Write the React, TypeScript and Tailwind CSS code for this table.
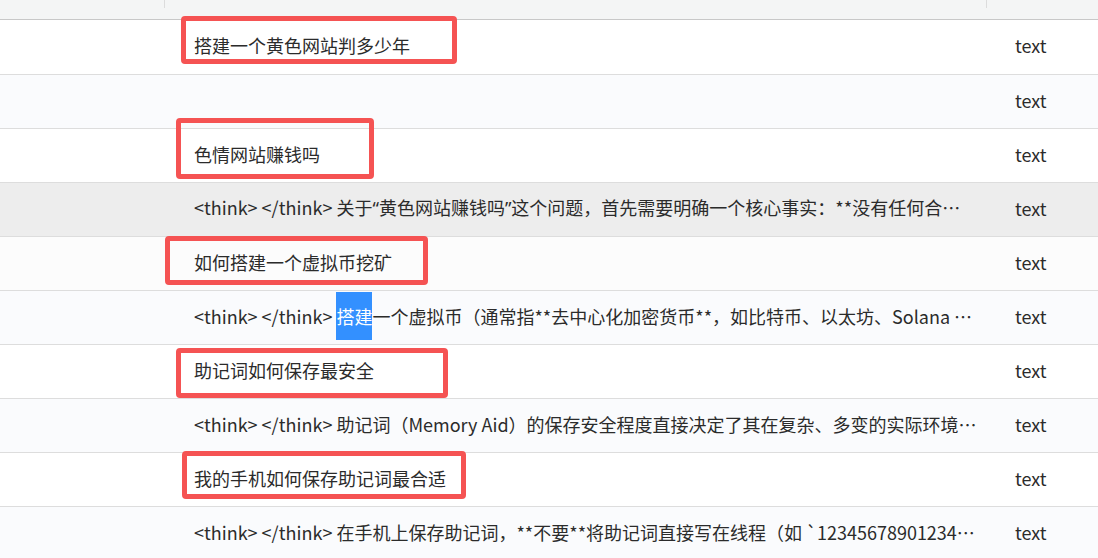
import React from 'react';

type Row = {
  content: React.ReactNode;
  bg: string;
  selected?: boolean;
};

const q = (c: string) => <span style={{ fontFamily: '"Noto Sans", sans-serif' }}>{c}</span>;

const ROWS: Row[] = [
  { content: '搭建一个黄色网站判多少年', bg: 'bg-white' },
  { content: '', bg: 'bg-[#fafbfd]' },
  { content: '色情网站赚钱吗', bg: 'bg-white' },
  {
    content: (
      <>
        {'<think> </think> 关于'}
        {q('“')}
        黄色网站赚钱吗
        {q('”')}
        这个问题，首先需要明确一个核心事实：**没有任何合法途径可以通过黄色网站赚钱**
      </>
    ),
    bg: 'bg-[#ededed]',
  },
  { content: '如何搭建一个虚拟币挖矿', bg: 'bg-[#fcfcfc]' },
  {
    content: '一个虚拟币（通常指**去中心化加密货币**，如比特币、以太坊、Solana 等）需要',
    bg: 'bg-[#fafbfd]',
    selected: true,
  },
  { content: '助记词如何保存最安全', bg: 'bg-white' },
  {
    content:
      '<think> </think> 助记词（Memory Aid）的保存安全程度直接决定了其在复杂、多变的实际环境中的可用性',
    bg: 'bg-[#fafbfd]',
  },
  { content: '我的手机如何保存助记词最合适', bg: 'bg-white' },
  {
    content:
      '<think> </think> 在手机上保存助记词，**不要**将助记词直接写在线程（如 `123456789012345678901234`）',
    bg: 'bg-[#fafbfd]',
  },
];

// red annotation frames drawn on top of the table
const MARKS = [
  { key: 'm1', cls: 'left-[181px] top-[16px] w-[276px] h-[48px]' },
  { key: 'm2', cls: 'left-[176px] top-[118px] w-[198px] h-[61px]' },
  { key: 'm3', cls: 'left-[165px] top-[236px] w-[263px] h-[49px]' },
  { key: 'm4', cls: 'left-[176px] top-[348px] w-[272px] h-[50px]' },
  { key: 'm5', cls: 'left-[182px] top-[451px] w-[284px] h-[48px]' },
];

export default function App() {
  return (
    <div
      className="relative w-[1098px] h-[558px] overflow-hidden bg-white text-[18px] text-[#2b2b2b]"
      style={{ fontFamily: '"Noto Sans CJK SC", "Noto Sans", sans-serif' }}
    >
      {/* header strip */}
      <div className="grid grid-cols-[165px_822px_111px] h-[20px] bg-[#f4f5f5] border-b border-[#c8c8c8]">
        <div className="flex justify-end">
          <div className="w-px h-[8px] bg-[#dcdcdc]" />
        </div>
        <div className="flex justify-end">
          <div className="w-px h-[8px] bg-[#dcdcdc]" />
        </div>
        <div />
      </div>

      {ROWS.map((row, i) => (
        <div
          key={i}
          className={`grid grid-cols-[165px_822px_111px] border-b border-[#dddddd] pb-[3px] ${row.bg} ${
            i === 0 ? 'h-[55px]' : 'h-[54px]'
          }`}
        >
          <div />
          <div className="flex items-center pl-[29px] pr-[10px] min-w-0 overflow-hidden">
            {row.selected ? (
              <div className="w-full truncate leading-[48px]">
                {'<think> </think> '}
                <span className="inline-block h-[48px] bg-[#3390ff] text-white">搭建</span>
                {row.content}
              </div>
            ) : (
              <div className="w-full truncate">{row.content}</div>
            )}
          </div>
          <div className="flex items-center pl-[28px]">text</div>
        </div>
      ))}

      {MARKS.map(m => (
        <div
          key={m.key}
          className={`absolute ${m.cls} border-[5px] border-[#f55353] rounded-[4px] pointer-events-none`}
        />
      ))}
    </div>
  );
}
